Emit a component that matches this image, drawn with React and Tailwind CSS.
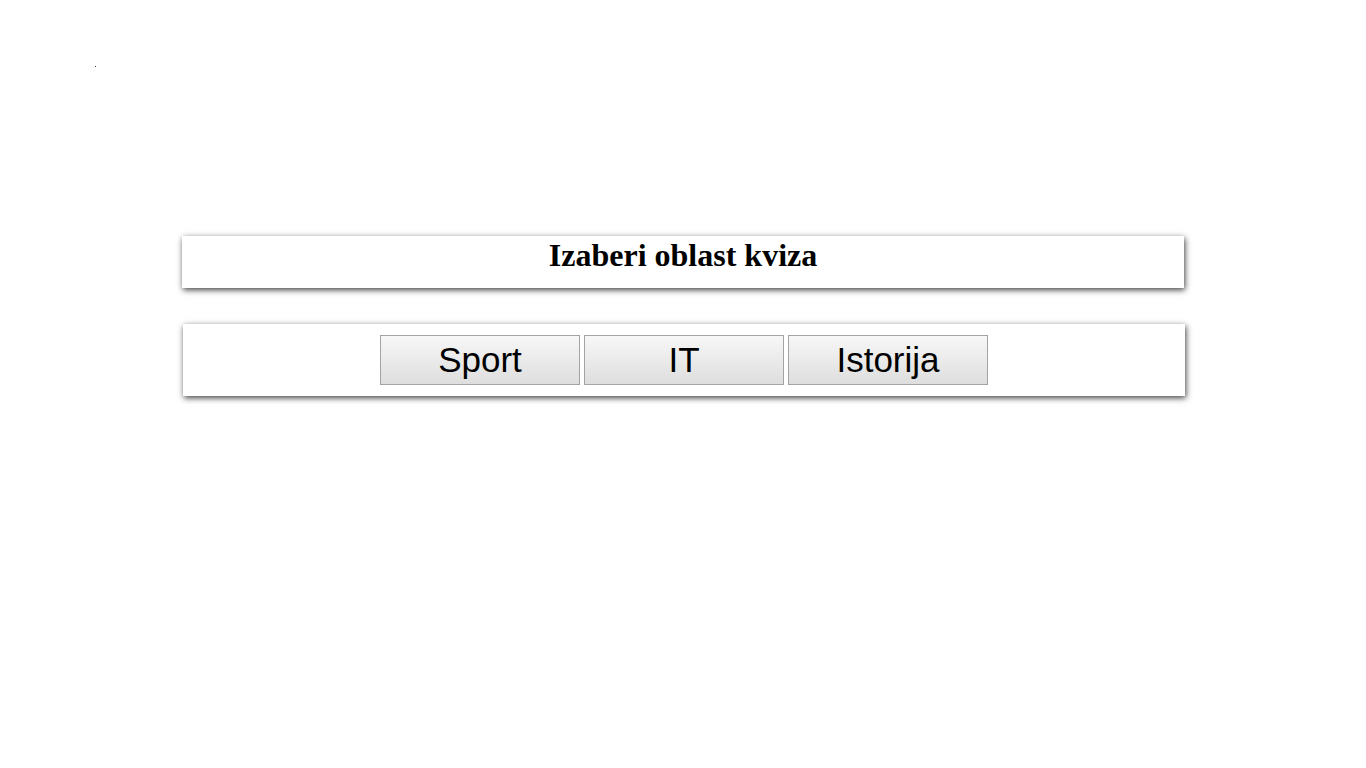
import React from "react";

const oblasti = ["Sport", "IT", "Istorija"];

const App = () => {
  return (
    <div className="min-h-screen bg-white pt-[66px]">
      {/* tacka u uglu */}
      <div className="ml-[95px] w-px h-px bg-[#333]" />

      <div className="w-[1002px] h-[52px] mx-auto mt-[169px] bg-white shadow-[1px_2px_6px_rgba(0,0,0,0.75)]">
        <h1
          className="text-center text-[32px] font-bold leading-[36px] pt-px text-black"
          style={{ fontFamily: '"Liberation Serif", "Times New Roman", serif' }}
        >
          Izaberi oblast kviza
        </h1>
      </div>

      <div className="w-[1002px] mx-auto mt-[36px] translate-x-px bg-white shadow-[1px_2px_6px_rgba(0,0,0,0.75)] pt-[11px] pb-[11px] flex justify-center gap-1">
        {oblasti.map((o) => (
          <button
            key={o}
            className="w-[200px] h-[50px] border border-[#a3a3a3] bg-gradient-to-b from-[#f7f7f7] to-[#dedede] text-[35px] text-black leading-none pb-px"
            style={{ fontFamily: '"Liberation Sans", Arial, sans-serif' }}
          >
            {o}
          </button>
        ))}
      </div>
    </div>
  );
};

export default App;
